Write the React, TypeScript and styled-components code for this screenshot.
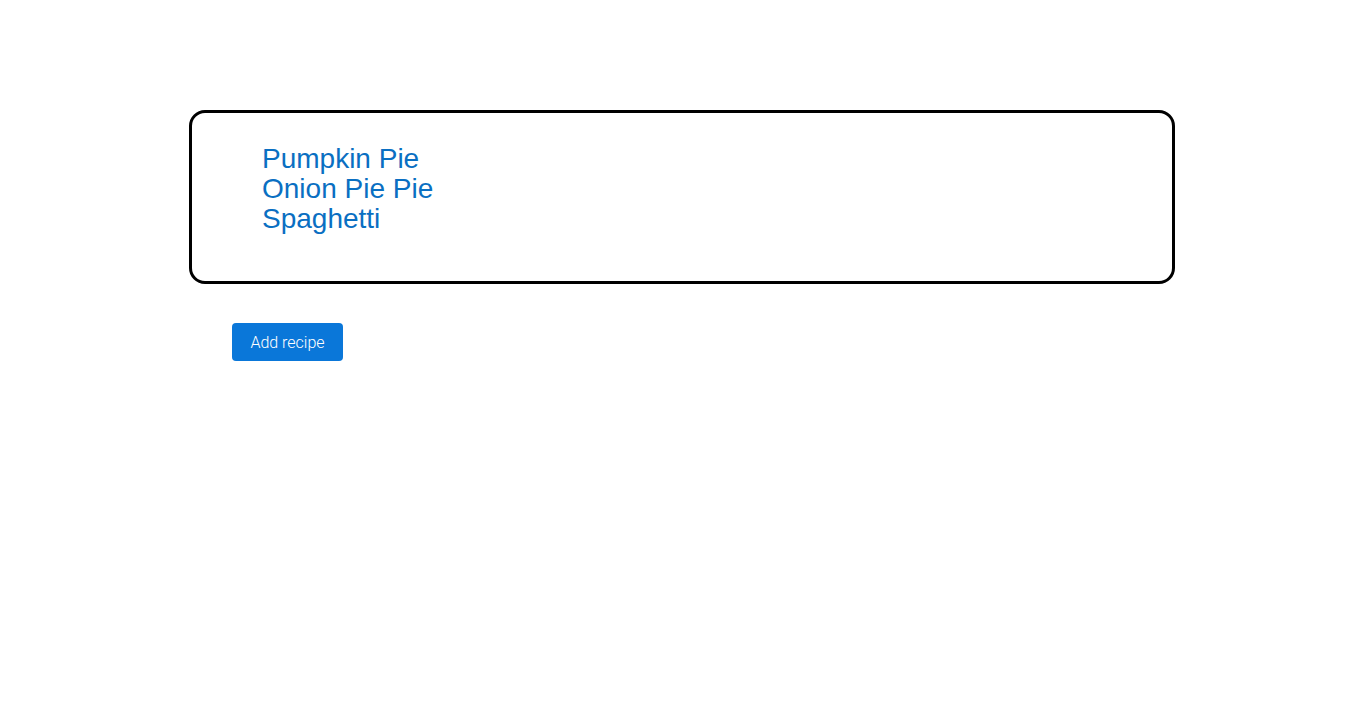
import React from "react";
import styled, { createGlobalStyle } from "styled-components";

const Global = createGlobalStyle`
  html, body { margin: 0; padding: 0; background: #ffffff; }
  body { font-family: "Liberation Sans", Arial, sans-serif; }
`;

const Page = styled.div`
  padding: 110px 1px 0 0;
  display: flex;
  flex-direction: column;
  align-items: center;
`;

const Column = styled.div`
  width: 986px;
  display: flex;
  flex-direction: column;
`;

const RecipeBox = styled.div`
  box-sizing: border-box;
  width: 100%;
  height: 174px;
  border: 3px solid #000;
  border-radius: 16px;
  padding: 31px 0 0 70px;
`;

const RecipeList = styled.ul`
  list-style: none;
  margin: 0;
  padding: 0;
`;

const RecipeItem = styled.li`
  font-family: "Liberation Sans", Arial, sans-serif;
  font-size: 28px;
  line-height: 30px;
  color: #0a6fc2;
`;

const Actions = styled.div`
  padding: 39px 0 0 43px;
`;

const Button = styled.button`
  width: 111px;
  height: 38px;
  border: none;
  border-radius: 4px;
  background: #0a77d9;
  color: #fff;
  font-family: Roboto, "Liberation Sans", sans-serif;
  font-weight: 300;
  font-size: 16px;
  cursor: pointer;
  padding: 0;
`;

export default function App() {
  const recipes = ["Pumpkin Pie", "Onion Pie Pie", "Spaghetti"];
  return (
    <>
      <Global />
      <Page>
        <Column>
          <RecipeBox>
            <RecipeList>
              {recipes.map((r) => (
                <RecipeItem key={r}>{r}</RecipeItem>
              ))}
            </RecipeList>
          </RecipeBox>
          <Actions>
            <Button>Add recipe</Button>
          </Actions>
        </Column>
      </Page>
    </>
  );
}
